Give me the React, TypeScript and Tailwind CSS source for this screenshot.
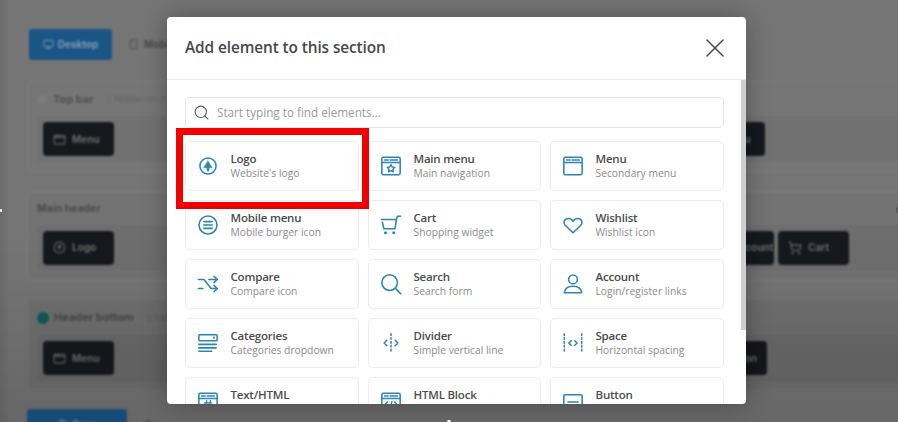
import { Fragment, type ReactNode } from 'react';
import { Monitor, Smartphone, ShoppingCart, AppWindow, CircleArrowUp, Search, X, Save, Settings } from 'lucide-react';

const ic = { fill: 'none', stroke: 'currentColor', strokeWidth: 1.5, strokeLinecap: 'round', strokeLinejoin: 'round' } as const;

function Ico({ children }: { children: ReactNode }) {
  return (
    <svg viewBox="0 0 24 24" className="w-[22px] h-[22px]" {...ic}>
      {children}
    </svg>
  );
}

const icons: Record<string, ReactNode> = {
  logo: (
    <Fragment>
      <circle cx="12" cy="12" r="8.8" strokeWidth="1.7" />
      <path d="M12 6.5 16.500 14h-3.500v3.500h-2V14H7.500z" fill="currentColor" strokeWidth="0.6" />
    </Fragment>
  ),
  mainMenu: (
    <Fragment>
      <rect x="2" y="2.500" width="20" height="19" rx="1.500" strokeWidth="1.700" />
      <path d="M2 8.200h20M5 5.400h4M11 5.400h8" />
      <path d="m12 10.500 1.300 2.600 2.900.4-2.100 2 .5 2.900-2.600-1.400-2.600 1.400.5-2.900-2.100-2 2.900-.4z" />
    </Fragment>
  ),
  menu: (
    <Fragment>
      <rect x="2" y="2.500" width="20" height="19" rx="1.500" strokeWidth="1.700" />
      <path d="M2 8.200h20M5 5.400h4M11 5.400h8" />
    </Fragment>
  ),
  mobile: (
    <Fragment>
      <circle cx="12" cy="12" r="9.800" strokeWidth="1.700" />
      <path d="M7.500 8.300h9M7.500 12h9M7.500 15.700h9" strokeWidth="1.700" />
    </Fragment>
  ),
  cart: (
    <Fragment>
      <path d="M1.500 6h16.500l-1.700 10H4.200L2.600 9M18 6l1-3.500h3.500" strokeWidth="1.700" />
      <circle cx="6" cy="20.500" r="0.900" fill="currentColor" />
      <circle cx="15" cy="20.500" r="0.900" fill="currentColor" />
    </Fragment>
  ),
  heart: <path d="M12 20.500 3.400 12.300C.8 9.400 2.600 4.900 6.800 4.900c2.300 0 4 1.100 5.200 3 1.200-1.900 2.900-3 5.200-3 4.200 0 6 4.500 3.400 7.400z" strokeWidth="1.700" />,
  compare: (
    <Fragment>
      <path d="M1.500 7h6l8 10h6.500M1.500 17h5M13 7h9" strokeWidth="1.700" />
      <path d="m18.500 3.500 3.500 3.500-3.500 3.500M18.500 13.500l3.500 3.500-3.500 3.500" strokeWidth="1.700" />
    </Fragment>
  ),
  search: (
    <Fragment>
      <circle cx="10.500" cy="10.500" r="8.500" strokeWidth="1.700" />
      <path d="m17 17 5.500 5.500" strokeWidth="1.700" />
    </Fragment>
  ),
  account: (
    <Fragment>
      <circle cx="12" cy="7" r="4.800" strokeWidth="1.700" />
      <path d="M2.500 21.500c.5-4.500 4-7 9.500-7s9 2.500 9.500 7z" strokeWidth="1.700" />
    </Fragment>
  ),
  categories: (
    <Fragment>
      <rect x="2" y="3" width="20" height="6.500" rx="1" strokeWidth="1.700" />
      <path d="M2 13.500h19M2 17.300h19M2 21.100h14" strokeWidth="1.700" />
      <circle cx="18.500" cy="6.200" r="0.500" fill="currentColor" />
    </Fragment>
  ),
  divider: (
    <Fragment>
      <path d="M12 2v20" strokeWidth="1.700" strokeDasharray="1.800 2.400" />
      <path d="M7.500 9 4.500 12l3 3M16.500 9l3 3-3 3" strokeWidth="1.700" />
    </Fragment>
  ),
  space: (
    <Fragment>
      <path d="M2.500 2v20M21.500 2v20" strokeWidth="1.700" strokeDasharray="1.800 2.400" />
      <path d="M10 9.500 7.500 12l2.500 2.500M14 9.500l2.500 2.500-2.500 2.500" strokeWidth="1.700" />
    </Fragment>
  ),
  text: (
    <Fragment>
      <rect x="2" y="2.500" width="20" height="19" rx="1.500" strokeWidth="1.700" />
      <path d="M2 8.200h20M5 5.400h4M11 5.400h8" />
      <path d="M10.500 10.500 9.500 19M14.500 10.500l-1 8.500M8 13h8M7.700 16.500h8" />
    </Fragment>
  ),
  html: (
    <Fragment>
      <rect x="2" y="2.500" width="20" height="19" rx="1.500" strokeWidth="1.700" />
      <path d="M2 8.200h20M5 5.400h4M11 5.400h8" />
      <path d="M8 12l-2.500 2.500L8 17M16 12l2.500 2.500L16 17M13 11.500 11 18" />
    </Fragment>
  ),
  button: (
    <Fragment>
      <rect x="2" y="4" width="20" height="16" rx="1.500" strokeWidth="1.700" />
      <path d="M6.500 12h11" strokeWidth="1.700" />
    </Fragment>
  ),
};

const elements = [
  ['logo', 'Logo', "Website's logo"],
  ['mainMenu', 'Main menu', 'Main navigation'],
  ['menu', 'Menu', 'Secondary menu'],
  ['mobile', 'Mobile menu', 'Mobile burger icon'],
  ['cart', 'Cart', 'Shopping widget'],
  ['heart', 'Wishlist', 'Wishlist icon'],
  ['compare', 'Compare', 'Compare icon'],
  ['search', 'Search', 'Search form'],
  ['account', 'Account', 'Login/register links'],
  ['categories', 'Categories', 'Categories dropdown'],
  ['divider', 'Divider', 'Simple vertical line'],
  ['space', 'Space', 'Horizontal spacing'],
  ['text', 'Text/HTML', 'Static text/HTML'],
  ['html', 'HTML Block', 'Reusable block'],
  ['button', 'Button', 'Button with link'],
];

function ElementCard({ icon, title, sub }: { icon: string; title: string; sub: string }) {
  return (
    <div className="h-[50px] rounded-[5px] border border-[#ececec] bg-white flex items-center pl-[10.5px]">
      <div className="w-[22px] h-[22px] text-[#2b85b5] shrink-0 -mt-[1px]">
        <Ico>{icons[icon]}</Ico>
      </div>
      <div className="ml-[12px] -mt-[1px]">
        <div className="text-[11.5px] leading-[15px] font-semibold tracking-[-0.2px] text-[#4c4c4c]">{title}</div>
        <div className="text-[10.3px] leading-[15px] text-[#8b8b8b]">{sub}</div>
      </div>
    </div>
  );
}

function DarkButton({ label, icon, className = '' }: { label: string; icon: ReactNode; className?: string }) {
  return (
    <div className={`w-[71px] h-[34px] rounded-[4px] bg-[#15181c] flex items-center pl-[10px] gap-[6px] text-[#6a6a6a] text-[10px] font-bold ${className}`}>
      {icon}
      <span>{label}</span>
    </div>
  );
}

function Backdrop() {
  return (
    <div className="w-[1000px] h-[440px] bg-[#757575] pt-[29px] pl-[27px] blur-[1px] font-['Inter',sans-serif]">
      <div className="flex items-center gap-[16px] pl-[2px]">
        <div className="w-[83px] h-[31px] rounded-[3px] bg-[#1a5585] flex items-center justify-center gap-[4px] text-[#7f9db6] text-[10px] font-bold">
          <Monitor size={11} />
          Desktop
        </div>
        <div className="flex items-center gap-[5px] text-[#4a4a4a] text-[10px] font-bold">
          <Smartphone size={11} />
          Mobile
        </div>
      </div>
      <section className="mt-[21px] w-[960px] h-[91px] rounded-[4px] border border-[#7e7e7e] bg-[#767676] px-[9px]">
        <div className="h-[34px] flex items-center text-[11px] font-bold text-[#505050]">
          <span className="w-[9px] h-[9px] rounded-full bg-[#7c7c7c] ml-[1px] mr-[6px]" />
          Top bar
          <span className="ml-[13px] text-[9px] font-normal text-[#636363]">▯ Hidden on mobile</span>
        </div>
        <div className="h-[46px] rounded-[3px] bg-[#717171] flex items-center pl-[6px]">
          <DarkButton label="Menu" icon={<AppWindow size={13} />} />
          <DarkButton label="Menu" className="ml-[580px]" icon={<AppWindow size={13} />} />
        </div>
      </section>
      <section className="mt-[19px] w-[960px] h-[90px] rounded-[4px] border border-[#7e7e7e] bg-[#737373] px-[9px]">
        <div className="h-[33px] flex items-center text-[10.5px] font-bold text-[#4a4a4a]">Main header</div>
        <div className="h-[45px] rounded-[3px] bg-[#6e6e6e] flex items-center pl-[6px]">
          <DarkButton label="Logo" icon={<CircleArrowUp size={13} />} />
          <DarkButton label="Account" className="ml-[589px]" icon={<AppWindow size={13} />} />
          <DarkButton label="Cart" className="ml-[4px]" icon={<ShoppingCart size={14} />} />
        </div>
      </section>
      <section className="mt-[18px] w-[960px] h-[91px] rounded-[4px] border border-[#797979] bg-[#6f6f6f] px-[9px]">
        <div className="h-[35px] flex items-center text-[11px] font-bold text-[#464646]">
          <span className="w-[12px] h-[12px] rounded-full bg-[#0b5c55] mr-[5px]" />
          Header bottom
          <span className="ml-[13px] text-[9px] font-normal text-[#5c5c5c]">▯ Hidden on mobile</span>
        </div>
        <div className="h-[46px] rounded-[3px] bg-[#6a6a6a] flex items-center pl-[6px]">
          <DarkButton label="Menu" icon={<AppWindow size={13} />} />
          <DarkButton label="Button" className="ml-[582px]" icon={<AppWindow size={13} />} />
        </div>
      </section>
      <div className="mt-[19px] flex items-center gap-[16px]">
        <div className="w-[100px] h-[31px] rounded-[3px] bg-[#1a5585] flex items-center justify-center gap-[4px] text-[#7f9db6] text-[10px] font-bold">
          <Save size={11} />
          Save
        </div>
        <Settings size={11} className="text-[#4a4a4a]" />
      </div>
    </div>
  );
}

function Modal() {
  return (
    <div className="absolute left-[167px] top-[17px] w-[579px] h-[387px] rounded-[4px] bg-white overflow-hidden flex flex-col shadow-[0_0_24px_rgba(0,0,0,0.3)] font-['Open_Sans',sans-serif]">
      <div className="h-[63px] shrink-0 border-b border-[#ececec] flex items-center justify-between pl-[18px] pr-[15px]">
        <h2 className="text-[15.4px] font-semibold tracking-[-0.1px] text-[#484848]">Add element to this section</h2>
        <X size={32} strokeWidth={1} className="text-[#444]" />
      </div>
      <div className="flex-1 overflow-hidden pl-[18px] pt-[17px]">
        <div className="w-[539px] h-[31px] rounded-[4px] border border-[#e6e6e6] flex items-center pl-[7px]">
          <Search size={17} strokeWidth={1.5} className="text-[#555]" />
          <span className="ml-[7px] text-[11.7px] text-[#9a9a9a]">Start typing to find elements...</span>
        </div>
        <div className="mt-[13px] w-[539px] grid grid-cols-[174px_173px_174px] gap-[9px]">
          {elements.map(([icon, title, sub]) => (
            <ElementCard key={title} icon={icon} title={title} sub={sub} />
          ))}
        </div>
      </div>
      <div className="absolute right-0 top-[63px] w-[5px] h-[250px] bg-[#cfcfcf]" />
    </div>
  );
}

export default function App() {
  return (
    <div className="relative w-[898px] h-[422px] overflow-hidden bg-[#757575]">
      <Backdrop />
      <div className="absolute inset-0 bg-[linear-gradient(to_bottom,rgba(0,0,0,0)_55%,rgba(0,0,0,0.12)_100%)]" />
      <div className="absolute left-0 top-0 w-[10px] h-full bg-[linear-gradient(to_right,rgba(0,0,0,0.08),rgba(0,0,0,0))]" />
      <Modal />
      <div className="absolute left-[176px] top-[128px] w-[193px] h-[81px] border-[7px] border-[#f00000]" />
      <div className="absolute left-0 top-[209px] w-[2px] h-[3px] rounded-full bg-white" />
      <div className="absolute left-[447px] top-[420px] w-[4px] h-[4px] rounded-full bg-white" />
      <div className="absolute left-[896px] top-[206px] w-[8px] h-[8px] rounded-full border border-[#4a4a4a]" />
    </div>
  );
}
